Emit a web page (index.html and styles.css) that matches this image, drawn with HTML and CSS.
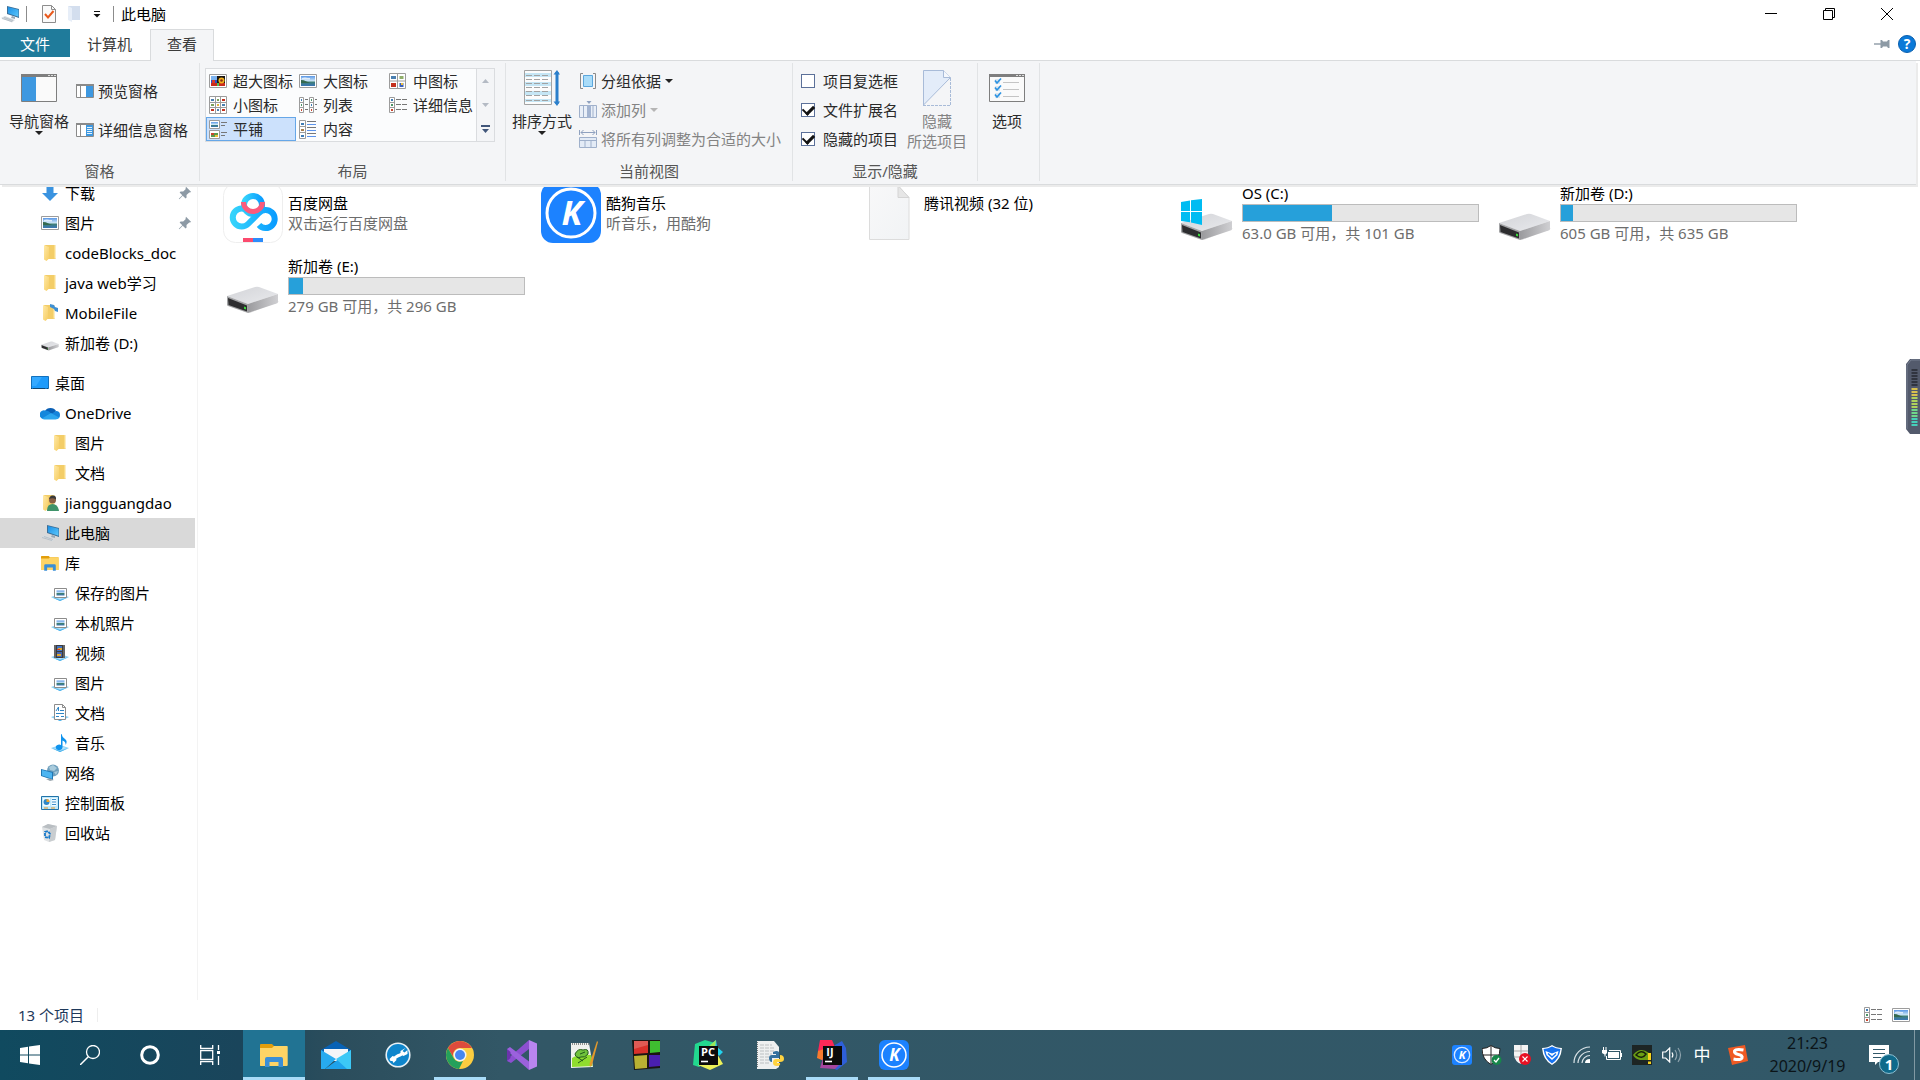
FILE: index.html
```html
<!DOCTYPE html>
<html lang="zh-CN">
<head>
    <meta charset="UTF-8">
    <meta name="viewport" content="width=device-width, initial-scale=1.0">
    <title>此电脑</title>
    <link rel="stylesheet" href="styles.css">
</head>
<body>
    <!-- shared icons -->
    <svg class="sprite" width="0" height="0" aria-hidden="true">
        <defs>
            <linearGradient id="g-screen" x1="0" y1="0" x2="1" y2="1"><stop offset="0" stop-color="#1b8fe6"/><stop offset="1" stop-color="#5cc8fb"/></linearGradient>
            <linearGradient id="g-fold" x1="0" y1="0" x2="1" y2="1"><stop offset="0" stop-color="#ffe9a6"/><stop offset="1" stop-color="#f6cd63"/></linearGradient>
            <linearGradient id="g-top" x1="0" y1="0" x2="1" y2="1"><stop offset="0" stop-color="#d3d4d8"/><stop offset="1" stop-color="#e9eaed"/></linearGradient>
            <linearGradient id="g-side" x1="0" y1="0" x2="1" y2="0"><stop offset="0" stop-color="#9b9b9e"/><stop offset="1" stop-color="#cfcfd2"/></linearGradient>
            <linearGradient id="g-sky" x1="0" y1="0" x2="0" y2="1"><stop offset="0" stop-color="#5a97e6"/><stop offset=".5" stop-color="#cfe8f7"/><stop offset=".6" stop-color="#3f7f74"/><stop offset="1" stop-color="#3a76b8"/></linearGradient>
            <linearGradient id="g-bd" x1="0" y1="0" x2="1" y2="0"><stop offset="0" stop-color="#35d3fb"/><stop offset="1" stop-color="#0a9dff"/></linearGradient>
            <linearGradient id="g-file" x1="0" y1="0" x2="1" y2="1"><stop offset="0" stop-color="#f8f8f9"/><stop offset="1" stop-color="#f1f3f5"/></linearGradient>
        </defs>
        <symbol id="pc" viewBox="0 0 20 18">
            <path d="M7 1l12 3v9L7 9z" fill="#3c6f97"/><path d="M8 2l10.500 2.700v7L8 8.300z" fill="url(#g-screen)"/>
            <path d="M12 11l3 1v2l-4-1z" fill="#9aa9b5"/><path d="M1 13l4-2 10 4-3 2.500z" fill="#d5dbe0"/><path d="M2 13.500l10 3M4 12.500l9 3" stroke="#a9b3bb" stroke-width=".7"/>
        </symbol>
        <symbol id="folder" viewBox="0 0 16 18">
            <path d="M3 1h10v13l1 1H4z" fill="#f3cd68"/><path d="M12 1h1.500v13.500H12z" fill="#f9dc87"/><path d="M2 1l5 2v11.500L4.500 17 2 15.500z" fill="url(#g-fold)"/>
        </symbol>
        <symbol id="picture" viewBox="0 0 18 14">
            <path d="M.5.5h17v13H.5z" fill="#fff" stroke="#9c9c9c"/><path d="M2 2h14v10H2z" fill="url(#g-sky)"/><path d="M2 6c4 0 6 2 9 3H2z" fill="#35694f"/><path d="M3 4c3-1.500 5 .5 8 0v1.500H3z" fill="#fff" opacity=".7"/>
        </symbol>
        <symbol id="drive" viewBox="0 0 53 28">
            <path d="M22 27l30-11 1-1-29 12z" fill="#ccc" opacity=".6"/>
            <path d="M1 10L29 1q2-.6 4 0l19 7-30 10z" fill="url(#g-top)"/><path d="M22 18L52 8v8q0 1-1.500 1.500L22 27z" fill="url(#g-side)"/>
            <path d="M1 10l21 8v9L2 20q-1-.5-1-1.500z" fill="#a2a3a5"/><path d="M2 12l19 7.500v6L2.500 19z" fill="#2d2d2f"/><path d="M18 20.500l2 .8v2.200l-2-.8z" fill="#3be03b"/>
        </symbol>
        <symbol id="pin" viewBox="0 0 14 14"><path d="M8 .8l5.200 5.200-1.600.6-.4-.2-2.700 2.700.1 2.500-1 1-2.900-2.900L1.300 13.200.8 12.700 4.300 9.300 1.600 6.500l1-1 2.600.1L7.800 3l-.3-.6z" fill="#8d9aa5"/></symbol>
        <symbol id="lib" viewBox="0 0 18 7"><path d="M0 3l9-3 9 3-9 4z" fill="#8fd2f7"/><path d="M3 3l6-2 6 2-6 2z" fill="#bfe7fb"/><path d="M0 3l9 3 9-3-9 4z" fill="#3faeea"/></symbol>
        <symbol id="libpic" viewBox="0 0 18 18"><use href="#lib" x="0" y="10" width="18" height="7"/><path d="M3.500 4.500h12v9h-12z" fill="#fff" stroke="#8c8c8c"/><path d="M5.500 6.500h8v5h-8z" fill="url(#g-sky)"/></symbol>
        <symbol id="details" viewBox="0 0 18 16">
            <path d="M.5.5h5v15h-5zM.5 5.500h5M.5 10.500h5" fill="#fff" stroke="#9c9c9c"/><path d="M2 2h2v2H2z" fill="#3f7cb5"/><path d="M2 7h2v2H2z" fill="#4d9467"/><path d="M2 12h2v2H2z" fill="#c8442e"/>
            <path d="M7 2.500h5m1 0h5M7 7.500h5m1 0h5M7 12.500h5m1 0h5" stroke="#777"/>
        </symbol>
        <symbol id="explorer" viewBox="0 0 28 24">
            <path d="M0 2q0-1 1-1h11l2 2h13v20H0z" fill="#e29e0b"/><path d="M0 5h12l2-2h13q.7 0 .7.700V22q0 1-1 1H1q-1 0-1-1z" fill="#fdd465"/>
            <path d="M5 24v-8q0-2 2-2h14q2 0 2 2v8h-4.500v-5h-9v5z" fill="#3a8fd6"/>
        </symbol>
    </svg>

    <header class="titlebar">
        <svg class="title-pc" width="20" height="18"><use href="#pc"/></svg>
        <span class="title-sep"></span>
        <button class="quick" aria-label="属性"><svg width="16" height="18" viewBox="0 0 16 18"><path d="M1.500.5h9l4 4v13h-13z" fill="#fafafa" stroke="#8d8d8d"/><path d="M10.500.5v4h4" fill="none" stroke="#8d8d8d"/><path d="M4 9l3 3.500L12.500 6" fill="none" stroke="#e8591c" stroke-width="2"/></svg></button>
        <button class="quick quick-folder" aria-label="新建文件夹"><svg width="14" height="18" viewBox="0 0 14 18"><path d="M1 1h12v14H4z" fill="#d3deee"/><path d="M1 1l4 2v14l-4-2z" fill="#e7eef8"/></svg></button>
        <button class="quick quick-more" aria-label="自定义快速访问工具栏"><svg width="8" height="7" viewBox="0 0 8 7"><path d="M1 .5h6" stroke="#111"/><path d="M.5 3h7L4 6.500z" fill="#111"/></svg></button>
        <span class="title-sep"></span>
        <h1>此电脑</h1>
        <div class="window-buttons">
            <button aria-label="最小化"><svg width="12" height="12" viewBox="0 0 12 12"><path d="M0 5.500h12" stroke="#000"/></svg></button>
            <button aria-label="还原"><svg width="12" height="12" viewBox="0 0 12 12"><path d="M.5 2.500h9v9h-9zM2.500 2.500v-2h9v9h-2" fill="none" stroke="#000"/></svg></button>
            <button aria-label="关闭"><svg width="12" height="12" viewBox="0 0 12 12"><path d="M0 0l12 12M12 0L0 12" stroke="#000"/></svg></button>
        </div>
    </header>

    <nav class="tabs">
        <button class="tab tab-file">文件</button>
        <button class="tab">计算机</button>
        <button class="tab tab-active">查看</button>
        <div class="tab-tools">
            <button aria-label="固定功能区"><svg width="16" height="8" viewBox="0 0 16 8"><path d="M0 4h7" stroke="#8d9aa5" stroke-width="1.400"/><path d="M6.500 0H8l1 1.500h4L14 0h1.500v8H14l-1-1.500H9L8 8H6.500z" fill="#8d9aa5"/></svg></button>
            <button aria-label="帮助"><svg width="18" height="18" viewBox="0 0 18 18"><circle cx="9" cy="9" r="8.500" fill="#0b79d8" stroke="#0a5fae"/><text x="9" y="14" class="help-mark">?</text></svg></button>
        </div>
    </nav>

    <section class="ribbon">
        <div class="group group-panes">
            <div class="group-body">
                <button class="big">
                    <span class="big-icon"><svg width="36" height="28" viewBox="0 0 36 28"><path d="M.5.5h35v27H.5z" fill="#fafafa" stroke="#7e7e7e"/><path d="M0 0h36v3H0z" fill="#7e7e7e"/><path d="M27 1.500h2m1 0h2m1 0h2" stroke="#ddd"/><path d="M1 3h14v24H1z" fill="#3e98e0"/></svg></span>
                    <span>导航窗格</span>
                    <i class="arrow"></i>
                </button>
                <div class="stack stack-panes">
                    <button class="small"><svg width="18" height="14" viewBox="0 0 18 14"><path d="M.5.5h17v13H.5zM4.500 2v11" fill="#fff" stroke="#8a8a8a"/><path d="M0 0h18v2H0z" fill="#8a8a8a"/><path d="M10 2h7v11h-7z" fill="#3e98e0"/></svg>预览窗格</button>
                    <button class="small"><svg width="18" height="14" viewBox="0 0 18 14"><path d="M.5.5h17v13H.5zM4.500 2v11" fill="#fff" stroke="#8a8a8a"/><path d="M0 0h18v2H0z" fill="#8a8a8a"/><path d="M10 2h7v11h-7z" fill="#3e98e0"/><path d="M11 4.500h5m-5 2h5m-5 2h5m-5 2h5" stroke="#e2f1fc"/></svg>详细信息窗格</button>
                </div>
            </div>
            <div class="group-label">窗格</div>
        </div>

        <div class="group group-layout">
            <div class="group-body">
                <div class="gallery">
                    <div class="gallery-grid">
                        <button><svg width="18" height="14" viewBox="0 0 18 14"><path d="M.5.5h17v13H.5z" fill="#fff" stroke="#9c9c9c"/><path d="M2 2h14v10H2z" fill="#2b4fc4"/><path d="M2 2h6v4H2z" fill="#7db4f0"/><path d="M8 2h8v8H8z" fill="#191410"/><path d="M2 9h14v3H2z" fill="#c92a1c"/><circle cx="12.500" cy="6.500" r="3" fill="#f4b51e"/><circle cx="12.500" cy="6.500" r="1.300" fill="#8a2a14"/><path d="M3 6h3v3H3z" fill="#d83b2a"/><path d="M8 9h2v3H8z" fill="#4fc04f"/></svg>超大图标</button>
                        <button><svg width="18" height="14"><use href="#picture"/></svg>大图标</button>
                        <button><svg width="18" height="16" viewBox="0 0 18 16"><path d="M.5.5h16v15H.5zM8.500.5v15M.5 8h16" fill="#fff" stroke="#9c9c9c"/><path d="M2 3h5v3H2z" fill="#4a7fb0"/><path d="M10.500 3h4v3h-4z" fill="#8fae6a"/><path d="M2 10h5v4H2z" fill="#c4301d"/><path d="M10.500 10h4v4h-4z" fill="#3a5fbb"/><path d="M12 10h2v2h-2z" fill="#efc23c"/></svg>中图标</button>
                        <button><svg width="18" height="18" viewBox="0 0 18 18"><path d="M.5.5h17v17H.5zM6.500.5v17M11.500.5v17M.5 6.500h17M.5 11.500h17" fill="#fff" stroke="#9c9c9c"/><path d="M2 3h3v2H2zM8 13h2v2H8zM13 8h3v2h-3z" fill="#4a7fb0"/><path d="M8 3h2v2H8zM2 8h3v2H2z" fill="#7ba05c"/><path d="M13 3h3v2h-3zM2 13h3v2H2zM13 13h3v2h-3z" fill="#c4301d"/><path d="M8 8h2v2H8z" fill="#e0b13c"/></svg>小图标</button>
                        <button><svg width="18" height="16" viewBox="0 0 18 16"><path d="M.5.5h4v15h-4zM.5 5.500h4M.5 10.500h4M10.500.5h4v15h-4zM10.500 5.500h4M10.500 10.500h4" fill="#fff" stroke="#9c9c9c"/><path d="M2 2h1v2H2zM12 7h1v2h-1z" fill="#3f7cb5"/><path d="M2 7h1v2H2zM12 2h1v2h-1z" fill="#4d9467"/><path d="M2 12h1v2H2zM12 12h1v2h-1z" fill="#c8442e"/><path d="M6 2.500h3m-3 5h3m-3 5h3m7-10h2m-2 5h2m-2 5h2" stroke="#777"/></svg>列表</button>
                        <button><svg width="18" height="16"><use href="#details"/></svg>详细信息</button>
                        <button class="selected"><svg width="18" height="19" viewBox="0 0 18 19"><path d="M.5.5h10v8H.5zM.5 10.500h10v8H.5z" fill="#fff" stroke="#9c9c9c"/><path d="M2 2h7v5H2z" fill="url(#g-sky)"/><path d="M2 13h7v4H2z" fill="#5c9a4c"/><path d="M2 13h3v2H2z" fill="#c8442e"/><path d="M6 15h3v2H6z" fill="#efc23c"/><path d="M12 2.500h6m-6 3h4m-4 7h6m-6 3h4" stroke="#777"/></svg>平铺</button>
                        <button><svg width="18" height="19" viewBox="0 0 18 19"><path d="M.5.5h6v18h-6zM.5 6.500h6M.5 12.500h6" fill="#fff" stroke="#9c9c9c"/><path d="M2 3h3v2H2zM2 15h3v2H2z" fill="#3f7cb5"/><path d="M2 9h3v2H2z" fill="#a87f4c"/><path d="M8 1.500h9M8 7.500h9M8 13.500h9" stroke="#777"/><path d="M8 4.500h9M8 10.500h9M8 16.500h9" stroke="#5b93ec"/></svg>内容</button>
                    </div>
                    <div class="gallery-scroll">
                        <button aria-label="上一行"><svg width="7" height="4" viewBox="0 0 7 4"><path d="M0 4h7L3.500 0z" fill="#b4bac4"/></svg></button>
                        <button aria-label="下一行"><svg width="7" height="4" viewBox="0 0 7 4"><path d="M0 0h7L3.500 4z" fill="#b4bac4"/></svg></button>
                        <button aria-label="更多"><svg width="9" height="8" viewBox="0 0 9 8"><path d="M0 1h9" stroke="#41567a" stroke-width="2"/><path d="M1 4h7L4.500 8z" fill="#41567a"/></svg></button>
                    </div>
                </div>
            </div>
            <div class="group-label">布局</div>
        </div>

        <div class="group group-view">
            <div class="group-body">
                <button class="big">
                    <span class="big-icon"><svg width="36" height="36" viewBox="0 0 36 36"><path d="M.5.500h27v34H.5z" fill="#fcfcfc" stroke="#a2a2a2"/><path d="M1 3h26v4H1zM1 12h26v4H1zM1 21h26v4H1zM1 29h26v3H1z" fill="#c5e6f5"/><path d="M2 5.500h24M2 9.500h24M2 13.500h24M2 17.500h24M2 21.500h24M2 25.500h24M2 30.500h24" stroke="#a2a2a2" stroke-dasharray="6 2"/><path d="M33 2v32" stroke="#2b7fcb" stroke-width="3"/><path d="M29.500 4.500L33 0l3 4.500zM29.500 31.500L33 36l3-4.500z" fill="#2b7fcb"/></svg></span>
                    <span>排序方式</span>
                    <i class="arrow"></i>
                </button>
                <div class="stack">
                    <button class="small"><svg width="18" height="16" viewBox="0 0 18 16"><path d="M4 .5H1.500v15H4M14 .5h2.500v15H14" fill="none" stroke="#8a8a8a"/><path d="M4.500 2.500h9v11h-9z" fill="#a9dcf9" stroke="#5ba6dc"/></svg>分组依据<i class="arrow"></i></button>
                    <button class="small" disabled><svg width="18" height="18" viewBox="0 0 18 18"><path d="M.5 4.500h17v12H.5zM4.500 4v13M14 4v13" fill="#e9eff8" stroke="#9fb0cb"/><path d="M8 4h4v13H8z" fill="#a3b4d1"/><path d="M7.500 0h5L10 3z" fill="#8fa1bf"/></svg>添加列<i class="arrow"></i></button>
                    <button class="small" disabled><svg width="18" height="18" viewBox="0 0 18 18"><path d="M.5 0v5M17.500 0v5M2 2.500h14M4.500 0L2 2.500 4.500 5M13.500 0L16 2.500 13.500 5" fill="none" stroke="#8fa1bf"/><path d="M.5 7.500h17v10H.5zM6 11v7M12 11v7" fill="#e3ebf6" stroke="#9fb0cb"/><path d="M0 10.500h18" stroke="#9fb0cb"/></svg>将所有列调整为合适的大小</button>
                </div>
            </div>
            <div class="group-label">当前视图</div>
        </div>

        <div class="group group-show">
            <div class="group-body">
                <div class="stack">
                    <label class="check"><input type="checkbox">项目复选框</label>
                    <label class="check"><input type="checkbox" checked>文件扩展名</label>
                    <label class="check"><input type="checkbox" checked>隐藏的项目</label>
                </div>
                <button class="big" disabled>
                    <span class="big-icon"><svg width="28" height="36" viewBox="0 0 28 36"><path d="M.5.500h20l7 7L.5 35z" fill="#e3ecf9" stroke="#a8bbd8"/><path d="M20.500.500v7h7" fill="#f4f7fc" stroke="#a8bbd8"/><path d="M27.500 8v27.500H0" fill="none" stroke="#a8bbd8" stroke-dasharray="3 1"/></svg></span>
                    <span>隐藏</span>
                    <span>所选项目</span>
                </button>
            </div>
            <div class="group-label">显示/隐藏</div>
        </div>

        <div class="group group-options">
            <div class="group-body">
                <button class="big">
                    <span class="big-icon"><svg width="36" height="28" viewBox="0 0 36 28"><path d="M.5.5h35v27H.5z" fill="#fafafa" stroke="#7e7e7e"/><path d="M0 0h36v3H0z" fill="#7e7e7e"/><path d="M27 1.500h2m1 0h2m1 0h2" stroke="#ddd"/><path d="M6 5h5v5H6zM6 12h5v5H6zM6 19h5v5H6z" fill="#dde6ee"/><path d="M6 6.500l2 2.500 4-4.500M6 13.500l2 2.500 4-4.500M6 20.500l2 2.500 4-4.500" fill="none" stroke="#2c93e2" stroke-width="1.700"/><path d="M14 8.500h16M14 15.500h16M14 22.500h16" stroke="#c4c4c4"/></svg></span>
                    <span>选项</span>
                </button>
            </div>
        </div>
    </section>

    <main class="main">
        <nav class="sidebar">
            <a href="#" class="l1"><span class="ico"><svg width="16" height="18" viewBox="0 0 16 18"><path d="M4.500 0h7v9H16l-8 8-8-8h4.500z" fill="#3a93e0"/></svg></span>下载<svg class="pin" width="14" height="14"><use href="#pin"/></svg></a>
            <a href="#" class="l1"><span class="ico"><svg width="18" height="14"><use href="#picture"/></svg></span>图片<svg class="pin" width="14" height="14"><use href="#pin"/></svg></a>
            <a href="#" class="l1"><span class="ico"><svg width="16" height="18"><use href="#folder"/></svg></span>codeBlocks_doc</a>
            <a href="#" class="l1"><span class="ico"><svg width="16" height="18"><use href="#folder"/></svg></span>java web学习</a>
            <a href="#" class="l1"><span class="ico"><svg width="18" height="18" viewBox="0 0 18 18"><use href="#folder" width="16" height="18"/><path d="M9 0l4 1 1 2 3 1v4l-3-1-1-2-4-2z" fill="#3f8fd2"/></svg></span>MobileFile</a>
            <a href="#" class="l1"><span class="ico ico-low"><svg width="18" height="10"><use href="#drive"/></svg></span>新加卷 (D:)</a>
            <a href="#" class="l0 root"><span class="ico"><svg width="18" height="14" viewBox="0 0 18 14"><path d="M.5.5h17v12H.5z" fill="#1e9bfb" stroke="#1371bd"/><path d="M1 1h10L5 10H1z" fill="#35a9ff"/><path d="M0 12.500h18" stroke="#12466f" stroke-dasharray="1 1 12 2"/></svg></span>桌面</a>
            <a href="#" class="l1"><span class="ico"><svg width="20" height="14" viewBox="0 0 20 14"><path d="M5 5a6 5 0 0 1 11 0l-4 5z" fill="#0a5fb4"/><path d="M5 4.500q4 0 6 3L3 13a4.300 4.300 0 0 1 2-8.500z" fill="#1487dc"/><path d="M16 5a4 4 0 0 1 4 4q0 4-4 4l-5-5z" fill="#1583da"/><path d="M2 12.500L11 7l8 4.500q-1 2-3.500 2H4.500Q3 13.500 2 12.500z" fill="#2ba5ee"/></svg></span>OneDrive</a>
            <a href="#" class="l2"><span class="ico"><svg width="16" height="18"><use href="#folder"/></svg></span>图片</a>
            <a href="#" class="l2"><span class="ico"><svg width="16" height="18"><use href="#folder"/></svg></span>文档</a>
            <a href="#" class="l1"><span class="ico"><svg width="18" height="18" viewBox="0 0 18 18"><use href="#folder" width="16" height="18"/><circle cx="11.500" cy="6" r="3.500" fill="#8b6044"/><path d="M8 5q1-4 4-3.500 3.500 0 3 4-3-2-7-.5z" fill="#3a3a3a"/><path d="M6 17q0-7 5.500-7t6.500 7z" fill="#3f936a"/></svg></span>jiangguangdao</a>
            <a href="#" class="l1 current"><span class="ico"><svg width="20" height="18"><use href="#pc"/></svg></span>此电脑</a>
            <a href="#" class="l1"><span class="ico"><svg width="18" height="16"><use href="#explorer"/></svg></span>库</a>
            <a href="#" class="l2"><span class="ico"><svg width="18" height="18"><use href="#libpic"/></svg></span>保存的图片</a>
            <a href="#" class="l2"><span class="ico"><svg width="18" height="18"><use href="#libpic"/></svg></span>本机照片</a>
            <a href="#" class="l2"><span class="ico"><svg width="18" height="18" viewBox="0 0 18 18"><use href="#lib" y="10" width="18" height="7"/><path d="M3 1h11v13H3z" fill="#3b3b3b"/><path d="M4 1.500v13M13 1.500v13" stroke="#e8e8e8" stroke-dasharray="1 1"/><path d="M6 2h5v5H6z" fill="#3f73c4"/><path d="M6 8h5v5H6z" fill="#4766ad"/><path d="M7 4h4v2H7zM6 10h4v2H6z" fill="#e2a72c"/><path d="M6 5h3v1H6z" fill="#cc3d26"/></svg></span>视频</a>
            <a href="#" class="l2"><span class="ico"><svg width="18" height="18"><use href="#libpic"/></svg></span>图片</a>
            <a href="#" class="l2"><span class="ico"><svg width="18" height="18" viewBox="0 0 18 18"><use href="#lib" y="10" width="18" height="7"/><path d="M3.500.5h8l3 3v12h-11z" fill="#fff" stroke="#8c8c8c"/><path d="M11.500.5v3h3" fill="none" stroke="#8c8c8c"/><path d="M5 7l2.500-4v4M9 6.500h4M5 9.500h8M5 12.500h3m2 0h3" fill="none" stroke="#2f86c6"/></svg></span>文档</a>
            <a href="#" class="l2"><span class="ico"><svg width="18" height="18" viewBox="0 0 18 18"><use href="#lib" y="11" width="18" height="7"/><path d="M10.500 0q.5 3 3.500 5t.5 6q.5-3.500-3-4.500v7a3.400 2.800 0 1 1-1.500-2.500V0z" fill="#0f93ee"/></svg></span>音乐</a>
            <a href="#" class="l1"><span class="ico"><svg width="18" height="18" viewBox="0 0 18 18"><circle cx="12" cy="6.500" r="6" fill="#6f9fbd"/><path d="M8 3l4-2 4 3-3 3-4-1zM13 8l4-1-2 4z" fill="#a9cbdc"/><path d="M0 5l12 3v8L0 12z" fill="#2177b4"/><path d="M1 6l10 2.700v6L1 11.500z" fill="#4db5f1"/><path d="M5 15l4 2 4-1-4-1.500z" fill="#9aa6ae"/></svg></span>网络</a>
            <a href="#" class="l1"><span class="ico"><svg width="18" height="14" viewBox="0 0 18 14"><path d="M.5.5h17v13H.5z" fill="#bfe9fb" stroke="#2173a9"/><path d="M2 2h7v8H2zM10.500 2h5v8h-5z" fill="#f4fbff"/><circle cx="5.500" cy="6" r="3" fill="#2c87c9"/><path d="M5.500 6V3a3 3 0 0 1 3 3z" fill="#f0a52c"/><path d="M11 3.500h4m-4 2.500h4m-4 2.500h4" stroke="#3c8fca"/><path d="M3 12h4m3 0h4" stroke="#e49325"/></svg></span>控制面板</a>
            <a href="#" class="l1"><span class="ico"><svg width="16" height="18" viewBox="0 0 16 18"><path d="M0 3l6-3 9 2-2 14-6 2-5-2z" fill="#dfe2e4"/><path d="M0 3l6-3 9 2-7 3z" fill="#b9bec2"/><path d="M8 5l7-3-2 14-6 2z" fill="#c9cdd0"/><path d="M3 8l3-1 2 3-1 4-4-1z" fill="none" stroke="#1879c9" stroke-width="1.800" stroke-dasharray="3 1"/></svg></span>回收站</a>
        </nav>

        <section class="tiles">
            <article class="tile">
                <svg width="60" height="60" viewBox="0 0 60 60">
                    <rect x=".5" y=".5" width="59" height="59" rx="12" fill="#fff" stroke="#eee"/>
                    <g fill="none" stroke="url(#g-bd)" stroke-width="6"><circle cx="30" cy="22" r="9"/><path d="M37 29L25 41a9 9 0 1 1 0-13M36 30a9 9 0 1 1 0 12"/></g>
                    <path d="M20.500 19a9.500 9.500 0 1 0 19 0" fill="none" stroke="#fb5a7c" stroke-width="5"/>
                    <path d="M20 55h10v4H20z" fill="#fb4a6e"/><path d="M30 55h10v4H30z" fill="#2b8cfb"/>
                </svg>
                <div class="tile-text"><h2>百度网盘</h2><p>双击运行百度网盘</p></div>
            </article>
            <article class="tile">
                <svg width="60" height="60" viewBox="0 0 60 60"><rect width="60" height="60" rx="12" fill="#1c82ff"/><circle cx="30" cy="30" r="24" fill="none" stroke="#fff" stroke-width="3"/><text x="31" y="42" class="logo-k">K</text></svg>
                <div class="tile-text"><h2>酷狗音乐</h2><p>听音乐，用酷狗</p></div>
            </article>
            <article class="tile">
                <svg width="60" height="60" viewBox="0 0 60 60"><path d="M10.500 2.500H39l11 12v42H10.500z" fill="url(#g-file)" stroke="#dcdcdc"/><path d="M39 2.500v12h11z" fill="#e6e6e6" stroke="#d4d4d4"/></svg>
                <div class="tile-text"><h2>腾讯视频 (32 位)</h2><p></p></div>
            </article>
            <article class="tile">
                <svg width="60" height="60" viewBox="0 0 60 60"><use href="#drive" x="3" y="30" width="53" height="28"/><path d="M4 19l9-1.500v10.500H4zM14 17.300L25 16v12H14zM4 29h9v10.300L4 38zM14 29h11v13l-11-2.500z" fill="#00bcf2"/></svg>
                <div class="tile-text"><h2>OS (C:)</h2><div class="meter"><span style="width: 38%"></span></div><p>63.0 GB 可用，共 101 GB</p></div>
            </article>
            <article class="tile">
                <svg width="60" height="60" viewBox="0 0 60 60"><use href="#drive" x="3" y="30" width="53" height="28"/></svg>
                <div class="tile-text"><h2>新加卷 (D:)</h2><div class="meter"><span style="width: 5%"></span></div><p>605 GB 可用，共 635 GB</p></div>
            </article>
            <article class="tile">
                <svg width="60" height="60" viewBox="0 0 60 60"><use href="#drive" x="3" y="30" width="53" height="28"/></svg>
                <div class="tile-text"><h2>新加卷 (E:)</h2><div class="meter"><span style="width: 6%"></span></div><p>279 GB 可用，共 296 GB</p></div>
            </article>
        </section>

        <!-- floating level meter -->
        <svg class="level" width="14" height="75" viewBox="0 0 14 75">
            <path d="M14 0H4L0 5v65l4 5h10z" fill="#535a6c"/><path d="M14 1H5L1 6v64" fill="none" stroke="#777e90"/>
            <path d="M8.500 10v18" stroke="#30343f" stroke-width="6" stroke-dasharray="2 1"/>
            <path d="M8.500 29v9" stroke="#d9c14e" stroke-width="6" stroke-dasharray="2 1"/><path d="M8.500 38v12" stroke="#aed35b" stroke-width="6" stroke-dasharray="2 1"/><path d="M8.500 50v9" stroke="#6fd68a" stroke-width="6" stroke-dasharray="2 1"/><path d="M8.500 59v9" stroke="#45d0b9" stroke-width="6" stroke-dasharray="2 1"/>
        </svg>
    </main>

    <div class="statusbar">
        <span class="count">13 个项目</span>
        <div class="view-buttons">
            <button aria-label="详细信息视图"><svg width="18" height="16"><use href="#details"/></svg></button>
            <button aria-label="大缩略图视图"><svg width="18" height="14"><use href="#picture"/></svg></button>
        </div>
    </div>

    <footer class="taskbar">
        <div class="system">
            <button aria-label="开始"><svg width="20" height="20" viewBox="0 0 20 20"><path d="M0 3l8-1.200V9.500H0zM9 1.600L20 0v9.500H9zM0 10.500h8v7.700L0 17zM9 10.500h11V20L9 18.400z" fill="#fff"/></svg></button>
            <button aria-label="搜索"><svg width="20" height="20" viewBox="0 0 20 20"><circle cx="13" cy="7" r="6.500" fill="none" stroke="#fff" stroke-width="1.300"/><path d="M8.500 11.500L0 20" stroke="#fff" stroke-width="1.500"/></svg></button>
            <button aria-label="Cortana"><svg width="20" height="20" viewBox="0 0 20 20"><circle cx="10" cy="10" r="8.300" fill="none" stroke="#fff" stroke-width="3"/></svg></button>
            <button aria-label="任务视图"><svg width="20" height="20" viewBox="0 0 20 20"><path d="M.7 0v3.300h12V0M.7 20v-3.300h12V20M.7 5.500h12v9H.7zM18.500 0v5m0 6v9" fill="none" stroke="#fff" stroke-width="1.300"/><path d="M17 6h3v3h-3z" fill="#fff"/></svg></button>
        </div>
        <div class="apps">
            <button class="app active" aria-label="文件资源管理器"><svg width="28" height="24"><use href="#explorer"/></svg></button>
            <button class="app" aria-label="邮件"><svg width="30" height="28" viewBox="0 0 30 28"><path d="M0 9L15 0l15 9v6H0z" fill="#0862b5"/><path d="M3 8h24v12H3z" fill="#f3f5f8"/><path d="M0 9l15 9-11 10H0z" fill="#27abf0"/><path d="M30 9v19H4z" fill="#1ea2ec"/><path d="M30 9L15 18l11 10h4z" fill="#3cc8f6"/></svg></button>
            <button class="app" aria-label="工具"><svg width="26" height="26" viewBox="0 0 26 26"><circle cx="13" cy="13" r="11.800" fill="#0f86cc" stroke="#e8f1f6" stroke-width="1.600"/><path d="M7.500 18.500L11 15q2-1.500 4-2l3.500-2" stroke="#fff" stroke-width="3"/><path d="M4.500 17l3-3 3 1 1 3-3 3-1-2-2 0zM20.500 6l-3 3 2 1.500 3-2.500v4l-4 2-3-2v-3z" fill="#fff"/></svg></button>
            <button class="app running" aria-label="Chrome"><svg width="28" height="28" viewBox="0 0 28 28"><circle cx="14" cy="14" r="14" fill="#fccd40"/><path d="M1.900 7a14 14 0 0 1 24.200 0H14a7 7 0 0 0-6.500 9.500z" fill="#de4b3c"/><path d="M1.900 7l6 10.500A7 7 0 0 0 17 20l-4 8A14 14 0 0 1 1.900 7z" fill="#24a05b"/><circle cx="14" cy="14" r="6.500" fill="#f2f4f6"/><circle cx="14" cy="14" r="5" fill="#4687f0"/></svg></button>
            <button class="app" aria-label="Visual Studio"><svg width="30" height="30" viewBox="0 0 30 30"><path d="M22 0l8 3.500v23L22 30z" fill="#b985ef"/><path d="M22 0v9L4 23l-4-2V19.500z" fill="#8c4fd0"/><path d="M0 9l3-2 19 14.500V30L0 10.500z" fill="#9b61dd"/><path d="M0 9l3.500 3v6L0 21z" fill="#6b33ad"/></svg></button>
            <button class="app" aria-label="Notepad++"><svg width="28" height="28" viewBox="0 0 28 28"><path d="M1 2h18l4 24-22 1z" fill="#f0f2ee"/><path d="M2 3h17" stroke="#8c8f8c" stroke-width="2" stroke-dasharray="1 1"/><path d="M2 17q8-5 19-3l1.500 11L2 26z" fill="#8fdc2f"/><path d="M5 13q3-6 8-4 6-2 5 4-3 4-7 3-5 2-6-3z" fill="#6fc23c" stroke="#245c1b"/><path d="M7 16l6 4m-5 2l9-6m-2-5l-5 2" stroke="#20591a"/><path d="M27 0l1 1-6 23-2 2-.5-3z" fill="#e39a2c"/></svg></button>
            <button class="app" aria-label="Code::Blocks"><svg width="28" height="30" viewBox="0 0 28 30"><path d="M0 0h28v28L2 30z" fill="#1a1512"/><path d="M2 1h14v12L2 14z" fill="#d8312a"/><path d="M18 1h10v11l-10 1z" fill="#3fbd30"/><path d="M2 16l13-1v13L3 29z" fill="#b9b133"/><path d="M17 15h11v11l-11 1z" fill="#4a1fae"/><path d="M2 1h14v4L2 9z" fill="#fff" opacity=".2"/></svg></button>
            <button class="app" aria-label="PyCharm"><svg width="30" height="30" viewBox="0 0 30 30"><path d="M2 4l10-4 10 3 2 8-18 16-6-2z" fill="#22d88f"/><path d="M17 5l6-5 1 7 6 5-4 4z" fill="#22d3ee"/><path d="M22 7l1-7-7 6z" fill="#9be757"/><path d="M23 12l7 12-13 6-12-5z" fill="#ecf159"/><path d="M6 6h19v19H6z" fill="#0b0b0b"/><text x="15" y="16" class="logo-jb">PC</text><path d="M8 21.500h7" stroke="#fff" stroke-width="1.600"/></svg></button>
            <button class="app" aria-label="Python"><svg width="28" height="28" viewBox="0 0 28 28"><path d="M1 0h17l5 6v20l-3 2H1z" fill="#eef0f0"/><path d="M1.500 1v26" stroke="#777" stroke-dasharray="1 1"/><path d="M4 4h12M4 7h15M4 10h14M4 13h12M4 16h9M4 19h9M4 22h10" stroke="#bcc0c2" stroke-dasharray="4 1"/><path d="M17 11q4-2 6 0v6h-7v4q-3 0-3-4 0-3 3-3h4v-1h-3z" fill="#33709e"/><path d="M24 14q4 0 4 4 0 3-4 3h-3v1h3q1 3-3 3-4 0-4-3 0-4 3-4h4z" fill="#ffd340"/></svg></button>
            <button class="app running" aria-label="IntelliJ IDEA"><svg width="30" height="30" viewBox="0 0 30 30"><path d="M3 0h12l3 7-10 9-7-5z" fill="#fe2857"/><path d="M1 11l6-2v12l-7-3z" fill="#f97a2d"/><path d="M18 5l7-4 4 7 1 14-10 8-9-4z" fill="#2e5fd9"/><path d="M3 28l3-10 16 7-4 4z" fill="#a6469f"/><path d="M6 6h19v19H6z" fill="#0b0b0b"/><text x="13" y="16" class="logo-jb">IJ</text><path d="M8 21.500h7" stroke="#fff" stroke-width="1.600"/></svg></button>
            <button class="app running" aria-label="酷狗音乐"><svg width="30" height="30" viewBox="0 0 60 60"><rect width="60" height="60" rx="12" fill="#1c82ff"/><circle cx="30" cy="30" r="24" fill="none" stroke="#fff" stroke-width="3"/><text x="31" y="42" class="logo-k">K</text></svg></button>
        </div>
        <div class="tray">
            <button aria-label="酷狗"><svg width="20" height="20" viewBox="0 0 60 60"><rect width="60" height="60" rx="9" fill="#1c82ff"/><circle cx="30" cy="30" r="23" fill="none" stroke="#d5e7ff" stroke-width="4"/><text x="31" y="42" class="logo-k">K</text></svg></button>
            <button aria-label="安全中心"><svg width="20" height="20" viewBox="0 0 20 20"><path d="M9 .5q4 3 9 3 0 11-9 16-9-5-9-16 5 0 9-3z" fill="#fff" stroke="#222"/><path d="M9 1v18M1 10h16" stroke="#222"/><circle cx="14.500" cy="15" r="5" fill="#16874a"/><path d="M12 15l2 2 3-4" fill="none" stroke="#fff" stroke-width="1.300"/></svg></button>
            <button aria-label="防火墙"><svg width="20" height="20" viewBox="0 0 20 20"><path d="M2 0h14v10q-2 8-7 9-6-2-7-9z" fill="#f4f4f4"/><path d="M9 0v19M2 6h14M2 12h13" stroke="#aaa"/><circle cx="13" cy="14" r="6" fill="#e81123"/><path d="M10.500 11.500l5 5m0-5l-5 5" stroke="#fff" stroke-width="1.200"/></svg></button>
            <button aria-label="电脑管家"><svg width="20" height="20" viewBox="0 0 20 20"><path d="M10 0q4 3 10 3-1 12-10 17Q1 15 0 3q6 0 10-3z" fill="#fff"/><path d="M10 1.500q4 2 8.500 2.500Q17 14 10 18.500 3 14 1.500 4 6 3.500 10 1.500z" fill="#1673f0"/><path d="M3.500 6l6.500 2.500L16.500 6 15.500 10 10 15 4.500 10z" fill="#fff"/><path d="M6 8.500l4 3.500 4-3.500" fill="none" stroke="#1673f0" stroke-width="1.500"/></svg></button>
            <button aria-label="网络"><svg width="18" height="18" viewBox="0 0 18 18"><g fill="none" stroke="#dbe4e8" stroke-width="1.200"><path d="M1 17A16 16 0 0 1 17 1M5 17A12 12 0 0 1 17 5.500M9 17a8 8 0 0 1 8-7.500"/></g><path d="M12 17q0-4 5-4v4z" fill="#fff"/></svg></button>
            <button aria-label="电池"><svg width="20" height="16" viewBox="0 0 20 16"><path d="M7 3.500h11.500v9h-14V9" fill="none" stroke="#fff"/><path d="M6 5h11v6H6z" fill="#fff"/><path d="M19 6h1v4h-1z" fill="#fff"/><path d="M0 3h5v3L3.500 7.500v2h-1v-2L0 6zM1 0h1v3H1zM3.500 0h1v3h-1z" fill="#fff"/></svg></button>
            <button aria-label="NVIDIA"><svg width="20" height="20" viewBox="0 0 20 20"><path d="M0 0h20v20H0z" fill="#1d2524"/><path d="M1 10q7-9 16-2v7H8Q3 14 1 10z" fill="#6c9f14"/><path d="M4 10q5-6 10-1-4 6-10 1z" fill="none" stroke="#17200a" stroke-width="1.500"/><path d="M16 8h3v7h-3zM16 16.500h3v2.500h-3z" fill="#f6d41b"/></svg></button>
            <button aria-label="音量"><svg width="20" height="16" viewBox="0 0 20 16"><path d="M.7 5h3l4-4v14l-4-4h-3z" fill="none" stroke="#fff" stroke-width="1.200"/><path d="M10 5.500q1.700 2.500 0 5" fill="none" stroke="#fff" stroke-width="1.200"/><path d="M13 3q3.500 5 0 10M16 1q5 7 0 14" fill="none" stroke="#8ea3ad" stroke-width="1.200"/></svg></button>
            <button class="ime" aria-label="输入法">中</button>
            <button class="sogou" aria-label="搜狗输入法"><svg width="20" height="20" viewBox="0 0 20 20"><path d="M0 3l17-3 3 16-16 4z" fill="#f05a23"/><path d="M15.500 5Q8 3.500 6.500 6q-.5 2.500 4 3.500 4.500 1 3.500 3.500-1.500 2.500-8.500 1" fill="none" stroke="#fff" stroke-width="3"/></svg></button>
            <button class="clock"><span>21:23</span><span>2020/9/19</span></button>
            <button class="notify" aria-label="通知"><svg width="22" height="20" viewBox="0 0 22 20"><path d="M0 0h20v17H9l-3 3v-3H0z" fill="#fff"/><path d="M4 4.500h12M4 8.500h12M4 12.500h8" stroke="#325868"/></svg><b class="badge">1</b></button>
        </div>
    </footer>
</body>
</html>
```

FILE: styles.css
```css
* {
    box-sizing: border-box;
}
body {
    margin: 0;
    height: 100vh;
    display: flex;
    flex-direction: column;
    overflow: hidden;
    font-family: "Noto Sans", "Noto Sans CJK SC", sans-serif;
    font-size: 15px;
    line-height: 20px;
    color: #000;
    background-color: #fff;
}
button {
    margin: 0;
    padding: 0;
    border: none;
    background: none;
    font: inherit;
    color: inherit;
    white-space: nowrap;
}
h1, h2, p {
    margin: 0;
    font-size: 15px;
    font-weight: normal;
}
svg {
    display: block;
    flex: none;
}
.sprite {
    position: absolute;
}
.logo-k {
    font: italic bold 34px "Noto Sans", sans-serif;
    fill: #fff;
    text-anchor: middle;
}
.logo-jb {
    font: bold 11px "Open Sans", sans-serif;
    fill: #fff;
    text-anchor: middle;
}
.help-mark {
    font: bold 14px "Open Sans", sans-serif;
    fill: #fff;
    text-anchor: middle;
}

/* title bar */
.titlebar {
    display: flex;
    align-items: center;
    height: 29px;
    padding-bottom: 1px;
    flex: none;
}
.title-pc {
    margin-right: 6px;
}
.title-sep {
    width: 1px;
    height: 16px;
    background-color: #8c8c8c;
}
.quick {
    margin-left: 14px;
}
.quick-folder {
    margin-left: 10px;
}
.quick-more {
    margin-left: 12px;
}
.titlebar .title-sep + h1 {
    margin-left: 7px;
}
.quick + .title-sep {
    margin-left: 12px;
}
.window-buttons {
    display: flex;
    margin-left: auto;
    margin-right: 4px;
}
.window-buttons button {
    display: flex;
    align-items: center;
    justify-content: center;
    width: 58px;
    height: 28px;
}

/* tabs */
.tabs {
    display: flex;
    flex: none;
    height: 32px;
    border-bottom: 1px solid #d9dbdd;
}
.tab {
    height: 32px;
    padding: 0 16px 3px;
    border: 1px solid transparent;
    border-bottom: none;
    color: #3b3b3b;
}
.tab-file {
    width: 70px;
    height: 28px;
    padding-bottom: 0;
    background-color: #1f7b9b;
    color: #fff;
}
.tab-active {
    margin-left: 1px;
    border-color: #d9dbdd;
    background-color: #f4f5f7;
}
.tab-tools {
    display: flex;
    align-items: center;
    gap: 8px;
    margin-left: auto;
    margin-right: 4px;
    padding-bottom: 2px;
}

/* ribbon */
.ribbon {
    display: flex;
    flex: none;
    position: relative;
    z-index: 1;
    height: 124px;
    margin-right: 4px;
    padding: 2px 0 3px;
    background-color: #f4f5f7;
    border-bottom: 1px solid #d9dbdd;
    box-shadow: 2px 2px 0 #ebebeb;
    color: #2a2a2a;
}
.group {
    display: flex;
    flex-direction: column;
    border-right: 1px solid #e1e3e5;
}
.group-body {
    display: flex;
    flex: 1;
}
.group-label {
    text-align: center;
    color: #555;
}
.group-panes {
    width: 200px;
}
.group-layout {
    width: 306px;
}
.group-view {
    width: 287px;
}
.group-show {
    width: 185px;
}
.group-options {
    width: 62px;
}
.group-panes .group-body {
    padding-left: 9px;
}
.group-layout .group-body {
    padding-left: 5px;
}
.group-view .group-body {
    padding-left: 6px;
}
.group-show .group-body {
    padding-left: 8px;
}
.group-options .group-body {
    padding-left: 11px;
}
.big {
    display: flex;
    flex-direction: column;
    align-items: center;
    align-self: flex-start;
    padding-top: 7px;
}
.big-icon {
    display: flex;
    align-items: center;
    height: 36px;
    margin-bottom: 5px;
}
.arrow {
    border: 4px solid transparent;
    border-top: 4px solid #222;
    border-bottom: none;
}
button:disabled {
    color: #838383;
}
button:disabled .arrow {
    border-top-color: #b5b5b5;
}
.stack {
    display: flex;
    flex-direction: column;
    gap: 9px;
    padding: 8px 0 0 7px;
}
.stack-panes {
    gap: 19px;
    padding-top: 18px;
}
.small {
    display: flex;
    align-items: center;
    gap: 4px;
    height: 20px;
}
.group-show .stack {
    padding-left: 0;
}
.group-show .big {
    margin-left: 9px;
}
.check {
    display: flex;
    align-items: center;
    gap: 8px;
}
.check input {
    appearance: none;
    display: flex;
    align-items: center;
    justify-content: center;
    width: 14px;
    height: 14px;
    margin: 0;
    border: 1px solid #5b7099;
    background-color: #fff;
}
.check input:checked::before {
    content: "";
    width: 9px;
    height: 5px;
    margin-bottom: 3px;
    border-left: 2px solid #111;
    border-bottom: 3px solid #111;
    transform: rotate(-45deg);
}
.gallery {
    display: flex;
    align-self: flex-start;
    margin-top: 5px;
    border: 1px solid #dadcdf;
    background-color: #fbfcfd;
}
.gallery-grid {
    display: grid;
    grid-template-columns: repeat(3, 90px);
    grid-auto-rows: 24px;
}
.gallery-grid button {
    display: flex;
    align-items: center;
    gap: 6px;
    padding-left: 2px;
    border: 1px solid transparent;
}
.gallery-grid .selected {
    border-color: #66a7e8;
    background-color: #cce1fc;
}
.gallery-scroll {
    display: grid;
    grid-template-rows: repeat(3, 24px);
    width: 18px;
    border-left: 1px solid #dadcdf;
    background-color: #f4f5f7;
}
.gallery-scroll button {
    display: flex;
    align-items: center;
    justify-content: center;
}

/* main area */
.main {
    display: flex;
    flex: 1;
    min-height: 0;
    overflow: hidden;
    position: relative;
}
.sidebar {
    width: 198px;
    flex: none;
    margin-top: -7px;
    padding-right: 2px;
    border-right: 1px solid #f3f3f3;
}
.sidebar a {
    display: flex;
    align-items: center;
    height: 30px;
    padding-right: 3px;
    color: #000;
    text-decoration: none;
}
.ico {
    display: flex;
    justify-content: center;
    width: 20px;
    margin-right: 5px;
}
.ico-low {
    padding-top: 6px;
}
.sidebar .l0 {
    padding-left: 30px;
}
.sidebar .l1 {
    padding-left: 40px;
}
.sidebar .l2 {
    padding-left: 50px;
}
.sidebar .root {
    margin-top: 10px;
}
.sidebar .current {
    background-color: #d9d9d9;
}
.pin {
    margin-left: auto;
}
.tiles {
    flex: 1;
    display: grid;
    grid-template-columns: repeat(auto-fill, 318px);
    grid-auto-rows: 73px;
    margin-top: -9px;
    padding-left: 25px;
}
.tile {
    display: flex;
    align-items: center;
    gap: 5px;
}
.tile-text {
    flex: 1;
    padding-right: 16px;
}
.tile p {
    min-height: 20px;
    color: #6d6d6d;
}
.meter {
    height: 18px;
    margin: 1px 0;
    border: 1px solid #bcbcbc;
    background-color: #e6e6e6;
}
.meter span {
    display: block;
    height: 100%;
    background-color: #26a0da;
}
.level {
    position: absolute;
    top: 174px;
    right: 0;
}

/* status bar */
.statusbar {
    display: flex;
    align-items: center;
    justify-content: space-between;
    flex: none;
    height: 30px;
    padding: 0 10px 0 18px;
    color: #1e395b;
}
.count {
    padding-right: 13px;
    line-height: 14px;
    border-right: 1px solid #eee;
}
.view-buttons {
    display: flex;
    align-items: center;
    gap: 10px;
}

/* taskbar */
.taskbar {
    display: flex;
    flex: none;
    height: 50px;
    background: linear-gradient(90deg, #104a5f 0, #1a455b 240px, #2b4d5c 330px, #325766 500px, #325868 100%);
}
.taskbar button {
    display: flex;
    align-items: center;
    justify-content: center;
    height: 50px;
}
.system, .apps, .tray {
    display: flex;
}
.system button {
    width: 60px;
}
.apps {
    margin-left: 3px;
}
.app {
    position: relative;
    width: 62px;
}
.app.active {
    background-color: #217393;
}
.app.active::after, .app.running::after {
    content: "";
    position: absolute;
    bottom: 0;
    left: 5px;
    right: 5px;
    height: 3px;
    background-color: #a9dcf8;
}
.app.active::after {
    left: 0;
    right: 0;
}
.tray {
    margin-left: auto;
    margin-right: 5px;
    border-right: 1px solid #8199a3;
}
.tray button {
    width: 30px;
}
.taskbar .ime {
    color: #fff;
    font-size: 17px;
}
.taskbar .sogou {
    width: 42px;
}
.taskbar .clock {
    flex-direction: column;
    gap: 3px;
    width: 97px;
    padding-bottom: 1px;
    font-size: 16px;
    color: #0b1418;
}
.taskbar .notify {
    position: relative;
    width: 58px;
    padding-right: 10px;
}
.badge {
    position: absolute;
    left: 23px;
    top: 24px;
    width: 20px;
    height: 20px;
    border: 1px solid #8fc0d2;
    border-radius: 50%;
    background-color: #0f6a8b;
    color: #fff;
    line-height: 18px;
    text-align: center;
}
```
